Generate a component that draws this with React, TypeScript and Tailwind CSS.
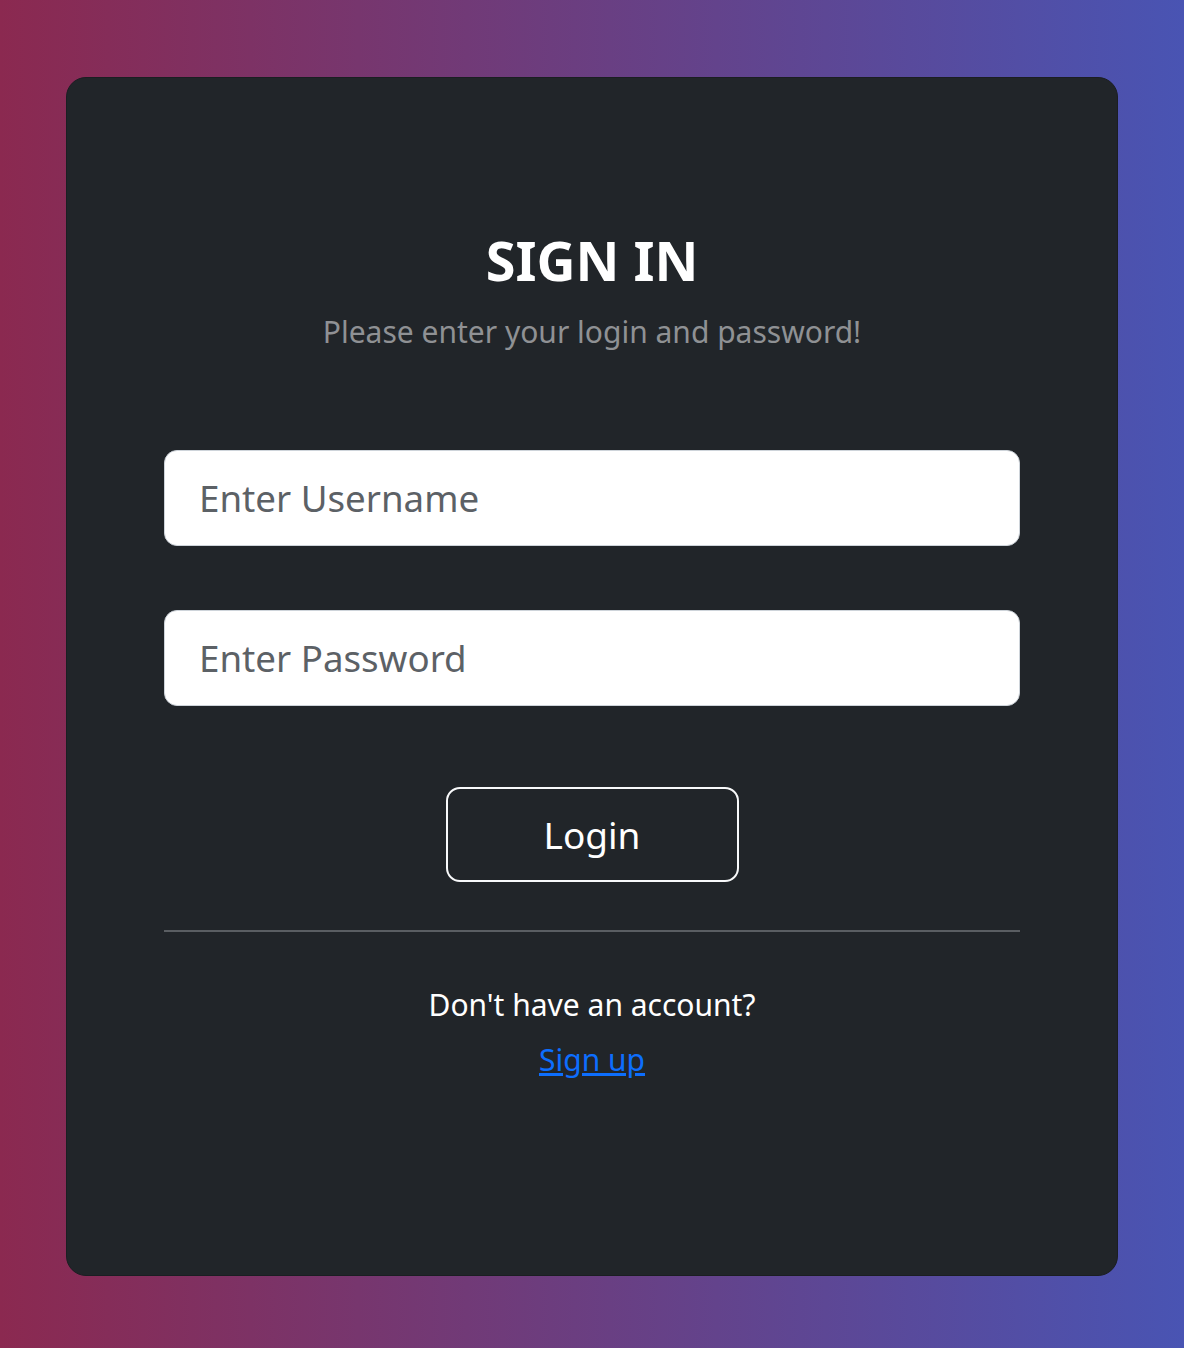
export default function App() {
  return (
    <div className="min-h-[1348px] w-full bg-linear-to-r/srgb from-[#8b2950] to-[#4954b3] px-[66px] pt-[77px] pb-[72px] font-['Noto_Sans',sans-serif]">
      <div className="flex h-[1199px] flex-col items-center rounded-[20px] border border-[#1b1e22] bg-[#212529] px-[97px] pt-[150px]">
        <h1 className="text-[54px] leading-[64px] font-bold text-white">SIGN IN</h1>
        <p className="mt-[20px] text-[30px] leading-[40px] text-[#8f9194]">
          Please enter your login and password!
        </p>

        <input
          type="text"
          placeholder="Enter Username"
          className="mt-[98px] h-[96px] w-full rounded-[13px] border border-[#ced4da] bg-white px-[34px] text-[36.7px] text-[#212529] outline-none placeholder:text-[#5c6166]"
        />
        <input
          type="password"
          placeholder="Enter Password"
          className="mt-[64px] h-[96px] w-full rounded-[13px] border border-[#ced4da] bg-white px-[34px] text-[36.7px] text-[#212529] outline-none placeholder:text-[#5c6166]"
        />

        <button className="mt-[81px] h-[95px] w-[293px] rounded-[14px] border-2 border-[#f8f9fa] text-[37px] text-white">
          Login
        </button>

        <hr className="mt-[48px] w-full border-t-2 border-[#5a5e62]" />

        <p className="mt-[53px] text-[30px] leading-[40px] text-white">Don't have an account?</p>
        <a href="#" className="mt-[15px] text-[30px] leading-[40px] text-[#0d6efd] underline">
          Sign up
        </a>
      </div>
    </div>
  );
}
